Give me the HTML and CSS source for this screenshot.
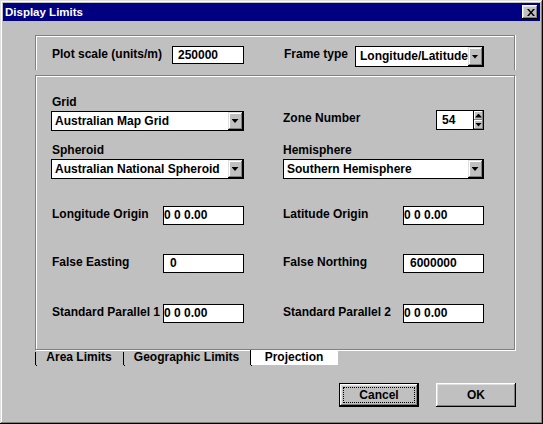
FILE: index.html
```html
<!DOCTYPE html>
<html>
<head>
<meta charset="utf-8">
<title>Display Limits</title>
<link rel="stylesheet" href="styles.css">
</head>
<body>
<div class="window">
  <div class="titlebar">
    <span class="title">Display Limits</span>
    <span class="close">
      <svg width="8" height="7" viewBox="0 0 8 7"><path d="M0 0h2l2 2.5L6 0h2L5 3.5 8 7H6L4 4.5 2 7H0l3-3.5z" fill="#000"/></svg>
    </span>
  </div>

  <div class="group group-top">
    <span class="lbl lbl-scale">Plot scale (units/m)</span>
    <span class="field f-scale">250000</span>
    <span class="lbl lbl-frame">Frame type</span>
    <div class="combo combo-frame"><span class="val">Longitude/Latitude</span><span class="drop"></span></div>
  </div>

  <div class="group group-main">
    <div class="row row-1">
      <div class="cell cell-l">
        <div class="lbl lbl-l">Grid</div>
        <div class="combo combo-wide"><span class="val">Australian Map Grid</span><span class="drop"></span></div>
      </div>
      <div class="cell cell-r inline zone">
        <span class="lbl">Zone Number</span>
        <div class="spin"><span class="spin-val">54</span><span class="spin-btns"><span class="sb sb-up"></span><span class="sb sb-down"></span></span></div>
      </div>
    </div>
    <div class="row row-2">
      <div class="cell cell-l">
        <div class="lbl lbl-l">Spheroid</div>
        <div class="combo combo-wide"><span class="val">Australian National Spheroid</span><span class="drop"></span></div>
      </div>
      <div class="cell cell-r">
        <div class="lbl">Hemisphere</div>
        <div class="combo combo-wide"><span class="val">Southern Hemisphere</span><span class="drop"></span></div>
      </div>
    </div>
    <div class="row row-3">
      <div class="cell cell-l inline">
        <span class="lbl lbl-l">Longitude Origin</span>
        <span class="field f-num tight">0 0 0.00</span>
      </div>
      <div class="cell cell-r inline">
        <span class="lbl">Latitude Origin</span>
        <span class="field f-num tight">0 0 0.00</span>
      </div>
    </div>
    <div class="row row-4">
      <div class="cell cell-l inline">
        <span class="lbl lbl-l">False Easting</span>
        <span class="field f-num">0</span>
      </div>
      <div class="cell cell-r inline">
        <span class="lbl">False Northing</span>
        <span class="field f-num">6000000</span>
      </div>
    </div>
    <div class="row row-5">
      <div class="cell cell-l inline">
        <span class="lbl lbl-l">Standard Parallel 1</span>
        <span class="field f-num tight">0 0 0.00</span>
      </div>
      <div class="cell cell-r inline">
        <span class="lbl">Standard Parallel 2</span>
        <span class="field f-num tight">0 0 0.00</span>
      </div>
    </div>
  </div>

  <div class="tabs">
    <span class="tab tab-1">Area Limits</span>
    <span class="tab tab-2">Geographic Limits</span>
    <span class="tab tab-3 active">Projection</span>
  </div>

  <div class="buttons">
    <span class="btn btn-default"><span class="focus">Cancel</span></span>
    <span class="btn">OK</span>
  </div>
</div>
</body>
</html>
```
FILE: styles.css
```css
html, body {
  margin: 0;
  padding: 0;
  background: #c0c0c0;
}

body {
  font-family: "Liberation Sans", Arial, sans-serif;
  font-weight: bold;
  font-size: 12px;
  color: #000;
}

.window {
  width: 543px;
  height: 424px;
  box-sizing: border-box;
  padding: 3px;
  background: #c0c0c0;
  box-shadow: inset -1px -1px 0 #000, inset 1px 1px 0 #dfdfdf, inset -2px -2px 0 #808080, inset 2px 2px 0 #fff;
  overflow: hidden;
}

.titlebar {
  height: 18px;
  background: #000080;
  color: #fff;
  display: flex;
  align-items: center;
  justify-content: space-between;
  padding: 0 2px 0 2px;
}

.title {
  font-size: 11.5px;
  line-height: 18px;
}

.close {
  width: 16px;
  height: 14px;
  box-sizing: border-box;
  background: #c0c0c0;
  box-shadow: inset -1px -1px 0 #000, inset 1px 1px 0 #fff, inset -2px -2px 0 #808080, inset 2px 2px 0 #dfdfdf;
  display: flex;
  align-items: center;
  justify-content: center;
  padding-left: 1px;
}

.close svg {
  display: block;
}

/* group boxes */
.group {
  box-sizing: border-box;
  width: 480px;
  margin-left: 32px;
  border: 1px solid #808080;
  box-shadow: 1px 1px 0 #fff, inset 1px 1px 0 #fff;
}

.group-top {
  margin-top: 14px;
  height: 35px;
  border-bottom: none;
  box-shadow: inset 1px 1px 0 #fff, 1px 0 0 #fff;
  display: flex;
  align-items: flex-start;
  padding: 10px 0 0 16px;
}

.group-main {
  margin-top: 5px;
  height: 275px;
  padding-left: 15px;
}

.lbl {
  line-height: 16px;
  white-space: nowrap;
}

.lbl-l {
  padding-left: 1px;
}

.lbl-scale {
  width: 120px;
  flex: none;
}

.lbl-frame {
  width: 71px;
  margin-left: 40px;
  flex: none;
}

/* text fields */
.field {
  box-sizing: border-box;
  display: block;
  flex: none;
  background: #fff;
  border: 1px solid #000;
  white-space: nowrap;
  overflow: hidden;
}

.f-scale {
  width: 72px;
  height: 18px;
  line-height: 16px;
  padding-left: 5px;
}

.f-num {
  width: 81px;
  height: 19px;
  line-height: 17px;
  padding-left: 6px;
}

.f-num.tight {
  padding-left: 0;
}

/* combo boxes */
.combo {
  box-sizing: border-box;
  display: flex;
  background: #fff;
  border: 1px solid #000;
  flex: none;
}

.combo .val {
  flex: 1;
  min-width: 0;
  overflow: hidden;
  white-space: nowrap;
  padding-left: 3px;
}

.combo-frame {
  width: 129px;
  height: 21px;
}

.combo-frame .val {
  line-height: 19px;
  padding-left: 4px;
}

.combo-wide {
  width: 100%;
  height: 20px;
  margin-top: 1px;
}

.combo-wide .val {
  line-height: 18px;
}

.drop {
  width: 15px;
  flex: none;
  background: #c0c0c0;
  box-shadow: inset -1px -1px 0 #000, inset 1px 1px 0 #dfdfdf, inset -2px -2px 0 #808080, inset 2px 2px 0 #fff;
  display: flex;
  align-items: center;
  justify-content: center;
}

.drop::after {
  content: "";
  width: 7px;
  height: 4px;
  background: #000;
  clip-path: polygon(0 0, 100% 0, 50% 100%);
  margin-left: -1px;
}

/* rows of the projection page */
.row {
  display: flex;
  gap: 39px;
}

.cell-l {
  width: 193px;
}

.cell-r {
  width: 201px;
}

.inline {
  display: flex;
  justify-content: space-between;
  align-items: flex-start;
}

.row-1 { margin-top: 18px; }
.row-2 { margin-top: 11px; }
.row-3 { margin-top: 27px; }
.row-4 { margin-top: 29px; }
.row-5 { margin-top: 31px; }

.zone {
  align-self: flex-end;
  margin-bottom: 1px;
}

/* spin box */
.spin {
  box-sizing: border-box;
  width: 48px;
  height: 20px;
  background: #fff;
  border: 1px solid #000;
  display: flex;
}

.spin-val {
  flex: 1;
  padding-left: 5px;
  line-height: 18px;
}

.spin-btns {
  width: 9px;
  display: flex;
  flex-direction: column;
  background: #c0c0c0;
  border-left: 1px solid #000;
}

.sb {
  flex: 1;
  display: flex;
  align-items: center;
  justify-content: center;
  box-shadow: inset -1px -1px 0 #808080, inset 1px 1px 0 #fff;
}

.sb::after {
  content: "";
  width: 7px;
  height: 4px;
  background: #000;
}

.sb-up::after {
  clip-path: polygon(50% 0, 100% 100%, 0 100%);
}

.sb-down::after {
  clip-path: polygon(0 0, 100% 0, 50% 100%);
}

/* tabs */
.tabs {
  display: flex;
  margin-left: 32px;
  height: 16px;
}

.tab {
  position: relative;
  box-sizing: border-box;
  height: 15px;
  line-height: 14px;
  text-align: center;
  white-space: nowrap;
}

.tab::before {
  content: "";
  position: absolute;
  left: 0;
  top: 2px;
  bottom: 0;
  width: 1px;
  background: #000;
}

.tab::after {
  content: "";
  position: absolute;
  left: 1px;
  bottom: -1px;
  width: 1px;
  height: 1px;
  background: #000;
}

.tab-1 { width: 88px; }
.tab-2 { width: 127px; }
.tab-3 { width: 88px; }

.tab.active {
  background: #fff;
}

.tab.active::before {
  top: 0;
}

/* dialog buttons */
.buttons {
  display: flex;
  justify-content: flex-end;
  gap: 17px;
  margin-top: 17px;
  padding-right: 24px;
}

.btn {
  box-sizing: border-box;
  width: 80px;
  height: 24px;
  display: flex;
  align-items: center;
  justify-content: center;
  background: #c0c0c0;
  box-shadow: inset -1px -1px 0 #000, inset 1px 1px 0 #fff, inset -2px -2px 0 #808080, inset 2px 2px 0 #dfdfdf;
}

.btn-default {
  border: 1px solid #000;
  padding: 3px;
  align-items: stretch;
}

.focus {
  flex: 1;
  display: flex;
  align-items: center;
  justify-content: center;
  border: 1px dotted #000;
}
```
